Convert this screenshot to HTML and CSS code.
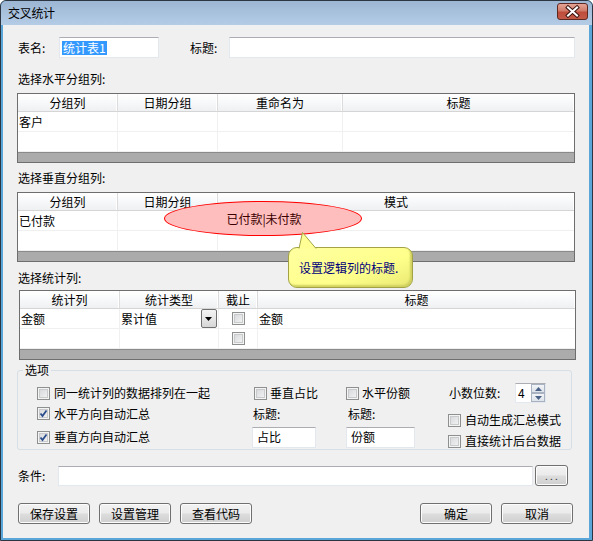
FILE: index.html
```html
<!DOCTYPE html>
<html lang="zh">
<head>
<meta charset="utf-8">
<link rel="stylesheet" href="styles.css">
</head>
<body>
<div class="win">
  <div class="titlebar">
    <span class="title">交叉统计</span>
    <div class="close">
      <svg width="31" height="17" viewBox="0 0 31 17">
        <path d="M11 4.5 L20 12.5 M20 4.5 L11 12.5" stroke="#3b1410" stroke-width="4" stroke-linecap="square"/>
        <path d="M11 4.5 L20 12.5 M20 4.5 L11 12.5" stroke="#ffffff" stroke-width="2" stroke-linecap="square"/>
      </svg>
    </div>
  </div>
  <div class="client">
    <div class="row-top">
      <span class="lbl lbl-name">表名:</span>
      <div class="input in-name"><span class="sel">统计表1</span></div>
      <span class="lbl lbl-title">标题:</span>
      <div class="input in-title"></div>
    </div>

    <div class="sect s1">选择水平分组列:</div>
    <div class="grid g1">
      <div class="hd">分组列</div><div class="hd">日期分组</div><div class="hd">重命名为</div><div class="hd last">标题</div>
      <div class="cell">客户</div><div class="cell"></div><div class="cell"></div><div class="cell last"></div>
      <div class="cell"></div><div class="cell"></div><div class="cell"></div><div class="cell last"></div>
      <div class="strip"></div>
    </div>

    <div class="sect s2">选择垂直分组列:</div>
    <div class="grid g2">
      <div class="hd">分组列</div><div class="hd">日期分组</div><div class="hd last">模式</div>
      <div class="cell">已付款</div><div class="cell"></div><div class="cell last"></div>
      <div class="cell"></div><div class="cell"></div><div class="cell last"></div>
      <div class="strip"></div>
    </div>

    <div class="sect s3">选择统计列:</div>
    <div class="grid g3">
      <div class="hd">统计列</div><div class="hd">统计类型</div><div class="hd">截止</div><div class="hd last">标题</div>
      <div class="cell">金额</div>
      <div class="cell combo"><span>累计值</span><span class="drop"><svg width="8" height="4" viewBox="0 0 8 4"><path d="M0 0 H7 L3.5 4 Z" fill="#000"/></svg></span></div>
      <div class="cell center"><span class="cb"></span></div>
      <div class="cell last">金额</div>
      <div class="cell"></div><div class="cell"></div>
      <div class="cell center"><span class="cb"></span></div>
      <div class="cell last"></div>
      <div class="strip"></div>
    </div>

    <fieldset class="opts">
      <legend>选项</legend>
      <div class="opt-grid">
        <div class="ck a1"><span class="cb"></span><span>同一统计列的数据排列在一起</span></div>
        <div class="ck b1"><span class="cb"></span><span>垂直占比</span></div>
        <div class="ck c1"><span class="cb"></span><span>水平份额</span></div>
        <div class="d1"><span>小数位数:</span>
          <div class="spin"><span class="spin-val">4</span>
            <span class="spin-btns">
              <span class="sb"><svg width="7" height="4" viewBox="0 0 7 4"><path d="M0 4 H7 L3.5 0 Z" fill="#4a6287"/></svg></span>
              <span class="sb"><svg width="7" height="4" viewBox="0 0 7 4"><path d="M0 0 H7 L3.5 4 Z" fill="#4a6287"/></svg></span>
            </span>
          </div>
        </div>

        <div class="ck a2"><span class="cb on"><svg width="9" height="9" viewBox="0 0 9 9"><path d="M1.5 4.5 L3.5 7 L7.5 1.5" stroke="#2a4c8c" stroke-width="1.8" fill="none"/></svg></span><span>水平方向自动汇总</span></div>
        <div class="b2 lbl">标题:</div>
        <div class="c2 lbl">标题:</div>
        <div class="ck d2"><span class="cb"></span><span>自动生成汇总模式</span></div>

        <div class="ck a3"><span class="cb on"><svg width="9" height="9" viewBox="0 0 9 9"><path d="M1.5 4.5 L3.5 7 L7.5 1.5" stroke="#2a4c8c" stroke-width="1.8" fill="none"/></svg></span><span>垂直方向自动汇总</span></div>
        <div class="b3"><div class="input in-small">占比</div></div>
        <div class="c3"><div class="input in-small2">份额</div></div>
        <div class="ck d3"><span class="cb"></span><span>直接统计后台数据</span></div>
      </div>
    </fieldset>

    <div class="row-cond">
      <span class="lbl lbl-cond">条件:</span>
      <div class="input in-cond"></div>
      <div class="btn btn-dots">. . .</div>
    </div>

    <div class="row-btns">
      <div class="btn">保存设置</div>
      <div class="btn">设置管理</div>
      <div class="btn">查看代码</div>
      <div class="spacer"></div>
      <div class="btn">确定</div>
      <div class="btn">取消</div>
    </div>
  </div>

  <div class="ellipse">已付款|未付款</div>
  <div class="callout">
    <svg class="pointer" width="24" height="17" viewBox="0 0 24 17">
      <path d="M6 16.5 L9.5 0.5 L23 16.5" fill="#ffff96" stroke="#a3a345" stroke-width="1"/>
    </svg>
    <div class="bubble">设置逻辑列的标题.</div>
  </div>
</div>
</body>
</html>
```

FILE: styles.css
```css
html, body {
  margin: 0;
  padding: 0;
  background: #ffffff;
}
body {
  font-family: "Noto Sans CJK SC", "Noto Sans", sans-serif;
  font-size: 12px;
  line-height: 14px;
  color: #000;
}
.win {
  position: relative;
  width: 593px;
  height: 541px;
  box-sizing: border-box;
  border: 1px solid #2c3642;
  border-radius: 6px 6px 0 0;
  background: #5aa6d8;
  padding: 0 2px 2px 2px;
  display: flex;
  flex-direction: column;
  overflow: hidden;
}
.titlebar {
  height: 24px;
  margin: 0 -2px;
  padding: 0 3px 0 7px;
  background: linear-gradient(#9cb6d3, #b4cce6);
  display: flex;
  align-items: center;
  justify-content: space-between;
  border-radius: 5px 5px 0 0;
}
.title {
  font-size: 12px;
  color: #000;
  letter-spacing: -0.3px;
}
.close {
  width: 31px;
  height: 17px;
  box-sizing: border-box;
  border: 1px solid #5e2720;
  border-radius: 3px;
  background: linear-gradient(#e5a597, #d07a68 45%, #bf4c3b 55%, #c35a48);
  display: flex;
  align-items: center;
  justify-content: center;
  margin-top: -3px;
  margin-right: 1px;
}
.close svg { display: block; margin: -1px; }
.client {
  flex: 1;
  background: #f0f0f0;
  margin-right: 1px;
  display: flex;
  flex-direction: column;
}
.lbl { white-space: nowrap; }
.row-top {
  display: flex;
  align-items: center;
  height: 21px;
  margin-top: 12px;
}
.lbl-name { margin-left: 15px; width: 41px; }
.lbl-title { margin-left: 31px; width: 39px; }
.input {
  box-sizing: border-box;
  height: 21px;
  background: #fff;
  border: 1px solid #e2e8ee;
  border-top-color: #abadb3;
  display: flex;
  align-items: center;
  padding-left: 2px;
}
.in-name { width: 100px; }
.in-title { width: 346px; }
.sel {
  background: #3399ff;
  color: #fff;
  padding: 0 1px;
  line-height: 14px;
}
.sect {
  margin-left: 15px;
  height: 14px;
}
.s1 { margin-top: 14px; }
.s2 { margin-top: 8px; }
.s3 { margin-top: 9px; }
.grid {
  display: grid;
  grid-template-rows: 18px 20px 20px 10px;
  border: 1px solid #6e6e6e;
  background: #fff;
  margin-top: 7px;
}
.g1 { margin-left: 14px; width: 556px; grid-template-columns: 100px 100px 125px 1fr; }
.g2 { margin-left: 14px; width: 556px; grid-template-columns: 100px 100px 1fr; }
.g3 { margin-left: 16px; width: 555px; grid-template-columns: 100px 99px 39px 1fr; margin-top: 5px; }
.hd {
  box-sizing: border-box;
  background: linear-gradient(#ffffff, #f8f9fa 45%, #eef0f2);
  border-bottom: 1px solid #d5d5d5;
  border-right: 1px solid #dcdcdc;
  box-shadow: inset -1px 0 0 #ffffff;
  text-align: center;
  line-height: 17px;
}
.hd.last { border-right: none; }
.cell {
  box-sizing: border-box;
  border-right: 1px solid #f0f0f0;
  border-bottom: 1px solid #f0f0f0;
  padding-left: 1px;
  line-height: 19px;
  display: flex;
  align-items: center;
}
.cell.last { border-right: none; }
.cell.center { justify-content: center; padding-left: 0; }
.combo { justify-content: space-between; padding-right: 0; }
.drop {
  width: 16px;
  height: 19px;
  box-sizing: border-box;
  border: 1px solid #707070;
  border-radius: 2px;
  background: linear-gradient(#f4f4f4, #e6e6e6 50%, #d6d6d6);
  display: flex;
  align-items: center;
  justify-content: center;
  margin-right: 1px;
  align-self: flex-start;
}
.drop svg { display: block; }
.strip {
  grid-column: 1 / -1;
  background: #ababab;
  border-top: 1px solid #8a8a8a;
  box-sizing: border-box;
}
.cb {
  width: 13px;
  height: 13px;
  box-sizing: border-box;
  border: 1px solid #8e8f8f;
  background: linear-gradient(135deg, #d2d4d6, #f7f7f7);
  box-shadow: inset 0 0 0 1px #f4f4f4, inset 0 0 0 2px #c8cacc;
  flex: none;
  display: inline-flex;
  align-items: center;
  justify-content: center;
}
.cb svg { display: block; }
.opts {
  margin: 3px 0 0 14px;
  width: 555px;
  height: 87px;
  box-sizing: border-box;
  border: 1px solid #d5dfe5;
  border-radius: 3px;
  padding: 6px 0 0 0;
  min-width: 0;
}
.opts legend {
  padding: 0 2px;
  margin-left: 5px;
  line-height: 14px;
}
.opt-grid {
  display: grid;
  grid-template-columns: 19px 216px 93px 101px 1fr;
  grid-template-rows: 20px 21px 26px;
}
.ck {
  display: flex;
  align-items: center;
  gap: 4px;
  white-space: nowrap;
}
.a1, .a2, .a3 { grid-column: 2; }
.b1, .b2, .b3 { grid-column: 3; }
.c1, .c2, .c3 { grid-column: 4; }
.d1, .d2, .d3 { grid-column: 5; }
.a1, .b1, .c1, .d1 { grid-row: 1; }
.a2, .b2, .c2, .d2 { grid-row: 2; }
.a3, .b3, .c3, .d3 { grid-row: 3; }
.b1 { margin-left: 1px; }
.ck.b1, .ck.c1 { gap: 3px; }
.b2, .c2 { display: flex; align-items: center; }
.c2 { margin-left: 2px; }
.b3, .c3 { display: flex; align-items: center; }
.b3 { margin-left: -1px; }
.in-small { width: 64px; height: 21px; padding-left: 4px; }
.in-small2 { width: 69px; height: 21px; padding-left: 4px; }
.d1 { display: flex; align-items: center; margin-left: 2px; gap: 0; }
.d1 > span:first-child { width: 66px; }
.spin {
  width: 31px;
  height: 20px;
  box-sizing: border-box;
  background: #fff;
  border: 1px solid #e2e8ee;
  border-top-color: #abadb3;
  display: flex;
  justify-content: space-between;
}
.spin-val { padding-left: 2px; line-height: 18px; }
.spin-btns { display: flex; flex-direction: column; width: 14px; }
.sb {
  flex: 1;
  box-sizing: border-box;
  border: 1px solid #a8b2c0;
  background: linear-gradient(#f2f4f7, #dde3ea);
  display: flex;
  align-items: center;
  justify-content: center;
}
.sb svg { display: block; }
.d2, .d3 { align-self: start; margin-top: 10px; margin-left: 1px; gap: 4px; }
.row-cond {
  display: flex;
  align-items: center;
  height: 21px;
  margin-top: 15px;
}
.lbl-cond { margin-left: 15px; width: 40px; }
.in-cond { width: 475px; height: 20px; }
.btn {
  box-sizing: border-box;
  width: 72px;
  height: 21px;
  border: 1px solid #707070;
  border-radius: 3px;
  background: linear-gradient(#f2f2f2, #ebebeb 48%, #dddddd 52%, #cfcfcf);
  box-shadow: inset 0 0 0 1px #fcfcfc;
  display: flex;
  align-items: center;
  justify-content: center;
  white-space: nowrap;
}
.btn-dots {
  width: 33px;
  margin-left: 2px;
  font-size: 10px;
  letter-spacing: 0;
  color: #333;
}
.row-btns {
  display: flex;
  margin-top: 17px;
  margin-left: 15px;
  gap: 9px;
}
.spacer { width: 150px; }
.ellipse {
  position: absolute;
  left: 163px;
  top: 200px;
  width: 198px;
  height: 35px;
  box-sizing: border-box;
  border: 1px solid #ff0000;
  border-radius: 50%;
  background: #ffbebe;
  color: #3a0000;
  display: flex;
  align-items: center;
  justify-content: center;
  padding-left: 2px;
  padding-top: 1px;
}
.callout {
  position: absolute;
  left: 287px;
  top: 231px;
  width: 126px;
  height: 57px;
}
.bubble {
  position: absolute;
  left: 0;
  top: 15px;
  width: 125px;
  height: 41px;
  box-sizing: border-box;
  border: 1px solid #a3a345;
  border-radius: 9px;
  background: linear-gradient(160deg, #ffffa0, #ffff8c 60%, #e8e872);
  box-shadow: inset -2px -2px 2px #d0d060;
  color: #00007a;
  padding-left: 10px;
  line-height: 40px;
  white-space: nowrap;
}
.pointer {
  position: absolute;
  left: 5px;
  top: 0;
  z-index: 2;
}
```
